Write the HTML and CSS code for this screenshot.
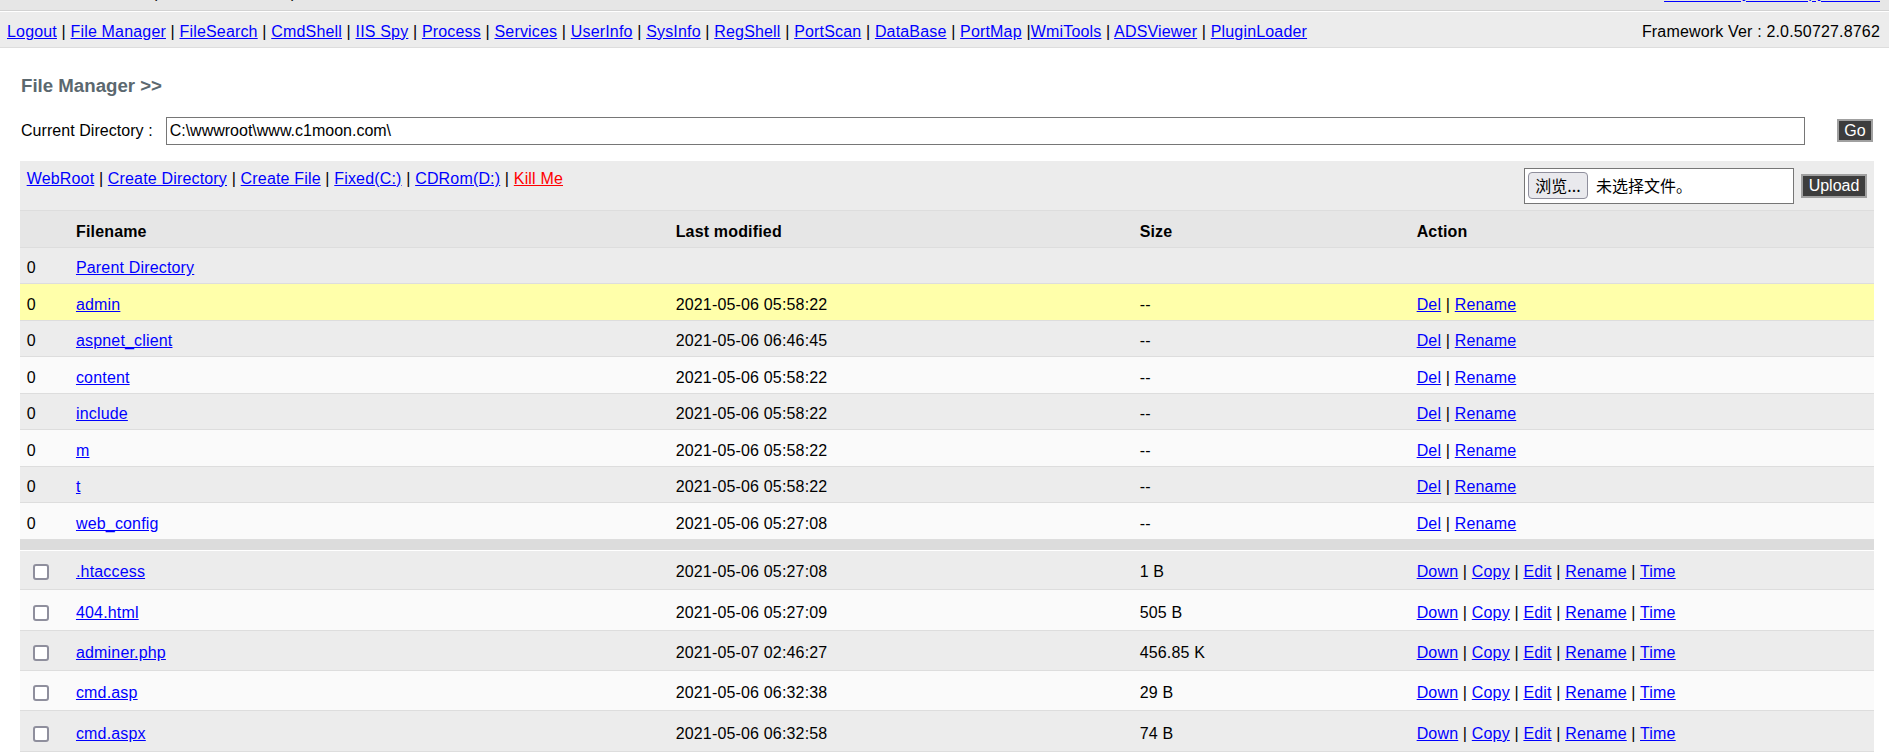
FILE: index.html
```html
<!DOCTYPE html>
<html lang="zh-CN">
<head>
<meta charset="utf-8">
<title>ASPXSpy - File Manager</title>
<link rel="stylesheet" href="styles.css">
</head>
<body>
<div class="header">
  <div class="header-line">
    <span class="host">Host : WIN-SRV-01 (IP : 192.168.10.15)</span>
    <a href="#" class="head-link">Powered by ASPXSpy 2014.1</a>
  </div>
</div>
<div class="menu">
  <div class="menu-links"><a href="#">Logout</a> | <a href="#">File Manager</a> | <a href="#">FileSearch</a> | <a href="#">CmdShell</a> | <a href="#">IIS Spy</a> | <a href="#">Process</a> | <a href="#">Services</a> | <a href="#">UserInfo</a> | <a href="#">SysInfo</a> | <a href="#">RegShell</a> | <a href="#">PortScan</a> | <a href="#">DataBase</a> | <a href="#">PortMap</a> |<a href="#">WmiTools</a> | <a href="#">ADSViewer</a> | <a href="#">PluginLoader</a></div>
  <div class="menu-ver">Framework Ver : 2.0.50727.8762</div>
</div>
<div class="content">
  <h2>File Manager &gt;&gt;</h2>
  <form class="dir-form">
    <label class="dir-label">Current Directory :</label>
    <input class="dir-input" type="text" value="C:\wwwroot\www.c1moon.com\">
    <button class="bt bt-go" type="button">Go</button>
  </form>
  <div class="toolbar">
    <div class="tool-links"><a href="#">WebRoot</a> | <a href="#">Create Directory</a> | <a href="#">Create File</a> | <a href="#">Fixed(C:)</a> | <a href="#">CDRom(D:)</a> | <a href="#" class="danger">Kill Me</a></div>
    <div class="upload">
      <span class="file-pick"><span class="file-btn">浏览...</span><span class="file-name">未选择文件。</span></span>
      <button class="bt bt-upload" type="button">Upload</button>
    </div>
  </div>
  <table class="files">
    <colgroup>
      <col class="c-sel"><col class="c-name"><col class="c-time"><col class="c-size"><col class="c-act">
    </colgroup>
    <thead>
      <tr class="head"><th></th><th>Filename</th><th>Last modified</th><th>Size</th><th>Action</th></tr>
    </thead>
    <tbody>
      <tr class="alt1"><td>0</td><td><a href="#">Parent Directory</a></td><td></td><td></td><td></td></tr>
      <tr class="focus"><td>0</td><td><a href="#">admin</a></td><td>2021-05-06 05:58:22</td><td>--</td><td><a href="#">Del</a> | <a href="#">Rename</a></td></tr>
      <tr class="alt1"><td>0</td><td><a href="#">aspnet_client</a></td><td>2021-05-06 06:46:45</td><td>--</td><td><a href="#">Del</a> | <a href="#">Rename</a></td></tr>
      <tr class="alt2"><td>0</td><td><a href="#">content</a></td><td>2021-05-06 05:58:22</td><td>--</td><td><a href="#">Del</a> | <a href="#">Rename</a></td></tr>
      <tr class="alt1"><td>0</td><td><a href="#">include</a></td><td>2021-05-06 05:58:22</td><td>--</td><td><a href="#">Del</a> | <a href="#">Rename</a></td></tr>
      <tr class="alt2"><td>0</td><td><a href="#">m</a></td><td>2021-05-06 05:58:22</td><td>--</td><td><a href="#">Del</a> | <a href="#">Rename</a></td></tr>
      <tr class="alt1"><td>0</td><td><a href="#">t</a></td><td>2021-05-06 05:58:22</td><td>--</td><td><a href="#">Del</a> | <a href="#">Rename</a></td></tr>
      <tr class="alt2"><td>0</td><td><a href="#">web_config</a></td><td>2021-05-06 05:27:08</td><td>--</td><td><a href="#">Del</a> | <a href="#">Rename</a></td></tr>
      <tr class="sep"><td colspan="5"></td></tr>
      <tr class="alt1 file first"><td><input type="checkbox" class="cb"></td><td><a href="#">.htaccess</a></td><td>2021-05-06 05:27:08</td><td>1 B</td><td><a href="#">Down</a> | <a href="#">Copy</a> | <a href="#">Edit</a> | <a href="#">Rename</a> | <a href="#">Time</a></td></tr>
      <tr class="alt2 file"><td><input type="checkbox" class="cb"></td><td><a href="#">404.html</a></td><td>2021-05-06 05:27:09</td><td>505 B</td><td><a href="#">Down</a> | <a href="#">Copy</a> | <a href="#">Edit</a> | <a href="#">Rename</a> | <a href="#">Time</a></td></tr>
      <tr class="alt1 file"><td><input type="checkbox" class="cb"></td><td><a href="#">adminer.php</a></td><td>2021-05-07 02:46:27</td><td>456.85 K</td><td><a href="#">Down</a> | <a href="#">Copy</a> | <a href="#">Edit</a> | <a href="#">Rename</a> | <a href="#">Time</a></td></tr>
      <tr class="alt2 file"><td><input type="checkbox" class="cb"></td><td><a href="#">cmd.asp</a></td><td>2021-05-06 06:32:38</td><td>29 B</td><td><a href="#">Down</a> | <a href="#">Copy</a> | <a href="#">Edit</a> | <a href="#">Rename</a> | <a href="#">Time</a></td></tr>
      <tr class="alt1 file"><td><input type="checkbox" class="cb"></td><td><a href="#">cmd.aspx</a></td><td>2021-05-06 06:32:58</td><td>74 B</td><td><a href="#">Down</a> | <a href="#">Copy</a> | <a href="#">Edit</a> | <a href="#">Rename</a> | <a href="#">Time</a></td></tr>
    </tbody>
  </table>
</div>
</body>
</html>
```

FILE: styles.css
```css
html, body {
  margin: 0;
  padding: 0;
  background: #ffffff;
}
body {
  font-family: "Liberation Sans", Arial, "Noto Sans CJK SC", sans-serif;
  font-size: 16px;
  line-height: 21.33px;
  letter-spacing: 0.17px;
  color: #000;
  overflow: hidden;
}
a {
  color: #0000ff;
  text-decoration: underline;
}
a.danger {
  color: #ff0000;
}

/* scrolled-off header: only its bottom edge remains visible */
.header {
  height: 10px;
  overflow: hidden;
  background: #e6e6e6;
  border-bottom: 1px solid #d2d2d2;
  display: flex;
  align-items: flex-end;
}
.header-line {
  flex: 1;
  display: flex;
  justify-content: space-between;
  padding: 0 9px 7px 7px;
  white-space: nowrap;
}
.head-link {
  text-underline-offset: 3px;
}

.menu {
  display: flex;
  justify-content: space-between;
  align-items: center;
  background: #ececec;
  border-top: 1px solid #ffffff;
  border-bottom: 1px solid #dddddd;
  padding: 8.67px 9px 4.67px 7px;
  white-space: nowrap;
}

.content {
  padding: 0 15px 0 20px;
}
.content h2 {
  margin: 21px 0 0 1px;
  padding: 0;
  height: 32px;
  line-height: 33.5px;
  font-size: 18.67px;
  font-weight: bold;
  letter-spacing: 0;
  color: #5b686f;
}

.dir-form {
  display: flex;
  align-items: center;
  margin: 16.3px 0 15px 0;
  height: 28px;
}
.dir-label {
  margin-left: 1px;
  white-space: nowrap;
  letter-spacing: 0.05px;
}
.dir-input {
  flex: 1;
  height: 28px;
  box-sizing: border-box;
  margin: 0 32px 0 13px;
  padding: 0 3px;
  border: 1px solid #767676;
  border-radius: 0;
  background: #fff;
  font-family: "Liberation Sans", Arial, sans-serif;
  font-size: 16px;
  color: #000;
  outline: none;
}

.bt {
  box-sizing: border-box;
  background: #3d3d3d;
  color: #ffffff;
  border: 2px solid #a0a0a0;
  border-radius: 0;
  padding: 0;
  font-family: "Liberation Sans", Arial, sans-serif;
  font-size: 16px;
  line-height: 18px;
  cursor: pointer;
}
.bt-go {
  width: 36px;
  height: 23px;
  margin-right: 1px;
}
.bt-upload {
  width: 66px;
  height: 24px;
}

.toolbar {
  display: flex;
  justify-content: space-between;
  align-items: flex-start;
  background: #ececec;
  border-top: 1px solid #ffffff;
  border-bottom: 1px solid #dddddd;
  padding: 6.67px 7px 6.67px 6.67px;
}
.tool-links {
  white-space: nowrap;
}
.upload {
  display: flex;
  align-items: center;
  gap: 7px;
}
.file-pick {
  box-sizing: border-box;
  width: 270px;
  height: 36px;
  display: flex;
  align-items: center;
  padding: 0 3px;
  border: 1px solid #767676;
  background: #ffffff;
  font-family: "Liberation Sans", "Noto Sans CJK SC", sans-serif;
  letter-spacing: 0;
  white-space: nowrap;
}
.file-btn {
  box-sizing: border-box;
  width: 60px;
  height: 27px;
  display: flex;
  align-items: center;
  justify-content: center;
  background: #e9e9ed;
  border: 1px solid #8f8f9d;
  border-radius: 4px;
  margin-right: 8px;
  font-family: "Noto Sans CJK SC", sans-serif;
  font-size: 16px;
}
.file-name {
  font-family: "Noto Sans CJK SC", sans-serif;
  font-size: 16px;
}

.files {
  width: 100%;
  table-layout: fixed;
  border-collapse: separate;
  border-spacing: 0;
}
.c-sel { width: 49.3px; }
.c-name { width: 599.7px; }
.c-time { width: 464px; }
.c-size { width: 277px; }
.files th,
.files td {
  padding: 8.4px 6.67px 4.8px;
  border-top: 1px solid transparent;
  border-bottom: 1px solid #dddddd;
  text-align: left;
  vertical-align: middle;
  white-space: nowrap;
  overflow: hidden;
  line-height: 21.33px;
}
.files th {
  font-weight: bold;
}
.head th { background: #e6e6e6; }
.alt1 td { background: #ececec; }
.alt2 td { background: #fafafa; }
.focus td { background: #ffffaa; }

.sep td {
  height: 10px;
  padding: 0;
  border: 0;
  background: #dcdcdc;
  line-height: 0;
  font-size: 0;
}
.file {
  height: 40.4px;
}
.file.first td {
  border-top-color: #ffffff;
}
.cb {
  -webkit-appearance: none;
  appearance: none;
  box-sizing: border-box;
  width: 16px;
  height: 16px;
  margin: 0 0 0 6.3px;
  border: 2px solid #8f8f9d;
  border-radius: 3px;
  background: #ffffff;
  vertical-align: -3px;
}
```
